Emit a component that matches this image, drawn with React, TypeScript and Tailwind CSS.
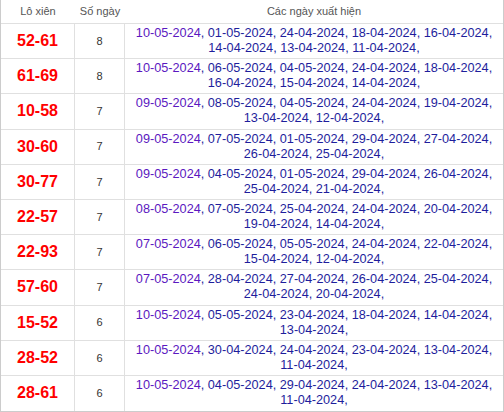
const rows: [string, number, string[]][] = [
  ['52-61', 8, ['10-05-2024', '01-05-2024', '24-04-2024', '18-04-2024', '16-04-2024', '14-04-2024', '13-04-2024', '11-04-2024']],
  ['61-69', 8, ['10-05-2024', '06-05-2024', '04-05-2024', '24-04-2024', '18-04-2024', '16-04-2024', '15-04-2024', '14-04-2024']],
  ['10-58', 7, ['09-05-2024', '08-05-2024', '04-05-2024', '24-04-2024', '19-04-2024', '13-04-2024', '12-04-2024']],
  ['30-60', 7, ['09-05-2024', '07-05-2024', '01-05-2024', '29-04-2024', '27-04-2024', '26-04-2024', '25-04-2024']],
  ['30-77', 7, ['09-05-2024', '04-05-2024', '01-05-2024', '29-04-2024', '26-04-2024', '25-04-2024', '21-04-2024']],
  ['22-57', 7, ['08-05-2024', '07-05-2024', '25-04-2024', '24-04-2024', '20-04-2024', '19-04-2024', '14-04-2024']],
  ['22-93', 7, ['07-05-2024', '06-05-2024', '05-05-2024', '24-04-2024', '22-04-2024', '15-04-2024', '12-04-2024']],
  ['57-60', 7, ['07-05-2024', '28-04-2024', '27-04-2024', '26-04-2024', '25-04-2024', '24-04-2024', '20-04-2024']],
  ['15-52', 6, ['10-05-2024', '05-05-2024', '23-04-2024', '18-04-2024', '14-04-2024', '13-04-2024']],
  ['28-52', 6, ['10-05-2024', '30-04-2024', '24-04-2024', '23-04-2024', '13-04-2024', '11-04-2024']],
  ['28-61', 6, ['10-05-2024', '04-05-2024', '29-04-2024', '24-04-2024', '13-04-2024', '11-04-2024']],
];

function DateLine({ dates, offset }: { dates: string[]; offset: number }) {
  return (
    <div className="whitespace-nowrap text-[#1e1e9c]">
      {dates.map((d, i) => (
        <span key={d + i}>
          <span className={i + offset === 0 ? 'text-[#5b18c0]' : ''}>{d}</span>,
          {i < dates.length - 1 ? ' ' : ''}
        </span>
      ))}
    </div>
  );
}

export default function App() {
  return (
    <div className="h-[412px] w-[504px] bg-white font-['Liberation_Sans',Arial,sans-serif]">
      <div className="flex flex-col border-x border-b border-[#cccccc]">
        {/* header */}
        <div className="flex h-[24px] items-center border-b border-[#e0e0e0] text-[11px] text-[#555555]">
          <div className="w-[74px] text-center">Lô xiên</div>
          <div className="w-[50px] text-center">Số ngày</div>
          <div className="flex-1 text-center">Các ngày xuất hiện</div>
        </div>

        {/* rows */}
        {rows.map(([pair, count, dates], idx) => (
          <div
            key={pair}
            className={
              'flex h-[35.2px] ' + (idx < rows.length - 1 ? 'border-b border-[#e0e0e0]' : '')
            }
          >
            <div className="flex w-[74px] items-center justify-center border-r border-[#e0e0e0] text-[16px] font-bold text-[#ff0000]">
              {pair}
            </div>
            <div className="flex w-[50px] items-center justify-center border-r border-[#e0e0e0] text-[11px] text-[#333333]">
              {count}
            </div>
            <div className="flex flex-1 flex-col items-center justify-center text-[12.7px] leading-[15px]">
              <DateLine dates={dates.slice(0, 5)} offset={0} />
              <DateLine dates={dates.slice(5)} offset={5} />
            </div>
          </div>
        ))}
      </div>
    </div>
  );
}
